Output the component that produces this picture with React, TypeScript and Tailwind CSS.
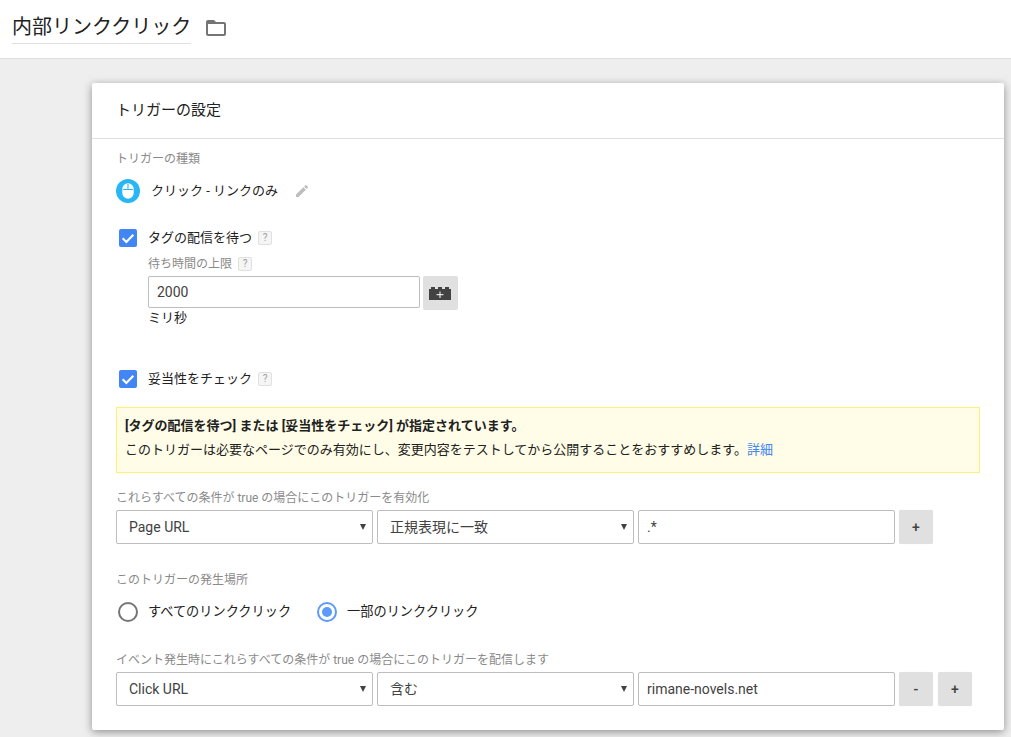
const FONT = "font-['Roboto','Noto_Sans_CJK_JP',sans-serif]"

function Help() {
  return (
    <span className="ml-[6px] flex h-[14px] w-[14px] items-center justify-center rounded-[2px] border border-[#e0e0e0] bg-[#f5f5f5] text-[10px] leading-none text-[#9e9e9e]">
      ?
    </span>
  )
}

function Check({ label }: { label: string }) {
  return (
    <div className="flex h-[18px] items-center pl-[3px]">
      <span className="flex h-[18px] w-[18px] items-center justify-center rounded-[2px] bg-[#4285f4]">
        <svg width="16" height="16" viewBox="0 0 24 24" fill="none" stroke="#fff" strokeWidth="3.2">
          <path d="M4 12.5l5.5 5.5L20 7" />
        </svg>
      </span>
      <span className="ml-[11px] text-[13px] leading-[18px] text-[#212121]">{label}</span>
      <Help />
    </div>
  )
}

function FieldLabel({ children }: { children: string }) {
  return <div className="text-[12px] leading-[14px] text-[#8a8a8a]">{children}</div>
}

function Select({ value }: { value: string }) {
  return (
    <div className="flex h-[34px] w-[257px] items-center justify-between rounded-[2px] border border-[#bdbdbd] bg-white pl-[12px] pr-[6px] text-[14px] text-[#424242]">
      <span>{value}</span>
      <span className="h-0 w-0 border-x-[3px] border-t-[6px] border-x-transparent border-t-[#424242]" />
    </div>
  )
}

function SmallButton({ label }: { label: string }) {
  return (
    <div className="flex h-[34px] w-[34px] items-center justify-center rounded-[2px] bg-[#e0e0e0] text-[14px] font-medium text-[#424242] shadow-[0_0_1px_rgba(0,0,0,0.1)]">
      {label}
    </div>
  )
}

function TextBox({ value }: { value: string }) {
  return (
    <div className="flex h-[34px] w-[257px] items-center rounded-[2px] border border-[#bdbdbd] bg-white pl-[8px] text-[14px] text-[#424242]">
      {value}
    </div>
  )
}

function Radio({ label, checked }: { label: string; checked?: boolean }) {
  return (
    <div className="flex items-center">
      <span
        className={`flex h-[20px] w-[20px] items-center justify-center rounded-full border-2 ${
          checked ? 'border-[#5c9bfa]' : 'border-[#757575]'
        }`}
      >
        {checked && <span className="h-[10px] w-[10px] rounded-full bg-[#5c9bfa]" />}
      </span>
      <span className="ml-[10px] text-[13.2px] text-[#212121]">{label}</span>
    </div>
  )
}

export default function App() {
  return (
    <div className={`${FONT} h-[737px] overflow-hidden bg-[#eeeeee]`}>
      {/* Top title bar */}
      <header className="flex h-[59px] items-start border-b border-[#e0e0e0] bg-white pl-[12px] pt-[11px]">
        <h1 className="h-[33px] border-b border-[#e0e0e0] text-[20px] leading-[33px] font-normal text-[#212121]">
          内部リンククリック
        </h1>
        <svg className="ml-[13px] mt-[5px]" width="24" height="24" viewBox="0 0 24 24" fill="#757575">
          <path d="M20 6h-8l-2-2H4c-1.1 0-2 .9-2 2v12c0 1.1.9 2 2 2h16c1.1 0 2-.9 2-2V8c0-1.1-.9-2-2-2zm0 12H4V8h16v10z" />
        </svg>
      </header>

      {/* Trigger card */}
      <section className="ml-[92px] mt-[24px] h-[647px] w-[912px] rounded-[2px] bg-white shadow-[0_2px_8px_rgba(0,0,0,0.4)]">
        <div className="flex h-[56px] items-center border-b border-[#e0e0e0] pl-[24px] text-[15px] text-[#212121]">
          トリガーの設定
        </div>

        <div className="pl-[24px] pr-[24px] pt-[13px]">
          <FieldLabel>トリガーの種類</FieldLabel>

          <div className="mt-[13px] flex h-[24px] items-center">
            <span className="flex h-[24px] w-[24px] items-center justify-center rounded-full bg-[#29b6f6]">
              <svg width="12" height="16" viewBox="0 0 12 16" fill="none" stroke="#fff" strokeWidth="1.4">
                <rect x="1" y="1" width="10" height="14" rx="5" fill="#fff" />
                <path d="M1 6.5h10M6 1v5.5" stroke="#29b6f6" strokeWidth="1.1" />
              </svg>
            </span>
            <span className="ml-[11px] text-[13px] text-[#212121]">クリック - リンクのみ</span>
            <svg className="ml-[16px]" width="16" height="16" viewBox="0 0 24 24" fill="#bdbdbd">
              <path d="M3 17.25V21h3.75L17.81 9.94l-3.75-3.75L3 17.25zM20.71 7.04a1 1 0 000-1.41l-2.34-2.34a1 1 0 00-1.41 0l-1.83 1.83 3.75 3.75 1.83-1.83z" />
            </svg>
          </div>

          <div className="mt-[26px]">
            <Check label="タグの配信を待つ" />
          </div>

          <div className="ml-[32px] mt-[10px]">
            <div className="flex h-[14px] items-center">
              <FieldLabel>待ち時間の上限</FieldLabel>
              <Help />
            </div>
            <div className="mt-[5px] flex items-start">
              <div className="flex h-[32px] w-[272px] items-center rounded-[2px] border border-[#bdbdbd] pl-[8px] text-[14px] text-[#424242]">
                2000
              </div>
              <div className="ml-[3px] flex h-[34px] w-[35px] items-center justify-center rounded-[2px] bg-[#e0e0e0] pr-[1px]">
                <svg width="22" height="13" viewBox="0 0 22 13">
                  <path d="M0 2h2V0h4v2h3V0h4v2h3V0h4v2h2v11H0z" fill="#424242" />
                  <path d="M11 4.5v6.5M7.5 7.7h7" stroke="#fff" strokeWidth="1" />
                </svg>
              </div>
            </div>
            <div className="text-[13px] leading-[16px] text-[#212121]">ミリ秒</div>
          </div>

          <div className="mt-[44px]">
            <Check label="妥当性をチェック" />
          </div>

          {/* Notice */}
          <div className="mt-[19px] h-[66px] w-[864px] border border-[#fff176] bg-[#fffde7] pl-[8px] pt-[6px] text-[13px] leading-[24px] text-[#212121]">
            <div className="font-bold">[タグの配信を待つ] または [妥当性をチェック] が指定されています。</div>
            <div>
              このトリガーは必要なページでのみ有効にし、変更内容をテストしてから公開することをおすすめします。
              <span className="text-[#4285f4]">詳細</span>
            </div>
          </div>

          <div className="mt-[18px]">
            <FieldLabel>これらすべての条件が true の場合にこのトリガーを有効化</FieldLabel>
          </div>
          <div className="mt-[5px] flex items-start gap-[4px]">
            <Select value="Page URL" />
            <Select value="正規表現に一致" />
            <TextBox value=".*" />
            <SmallButton label="+" />
          </div>

          <div className="mt-[29px]">
            <FieldLabel>このトリガーの発生場所</FieldLabel>
          </div>
          <div className="ml-[2px] mt-[15px] flex h-[20px] items-center gap-[26px]">
            <Radio label="すべてのリンククリック" />
            <Radio label="一部のリンククリック" checked />
          </div>

          <div className="mt-[31px]">
            <FieldLabel>イベント発生時にこれらすべての条件が true の場合にこのトリガーを配信します</FieldLabel>
          </div>
          <div className="mt-[5px] flex items-start gap-[4px]">
            <Select value="Click URL" />
            <Select value="含む" />
            <TextBox value="rimane-novels.net" />
            <SmallButton label="-" />
            <div className="ml-[1px]">
              <SmallButton label="+" />
            </div>
          </div>
        </div>
      </section>
    </div>
  )
}
